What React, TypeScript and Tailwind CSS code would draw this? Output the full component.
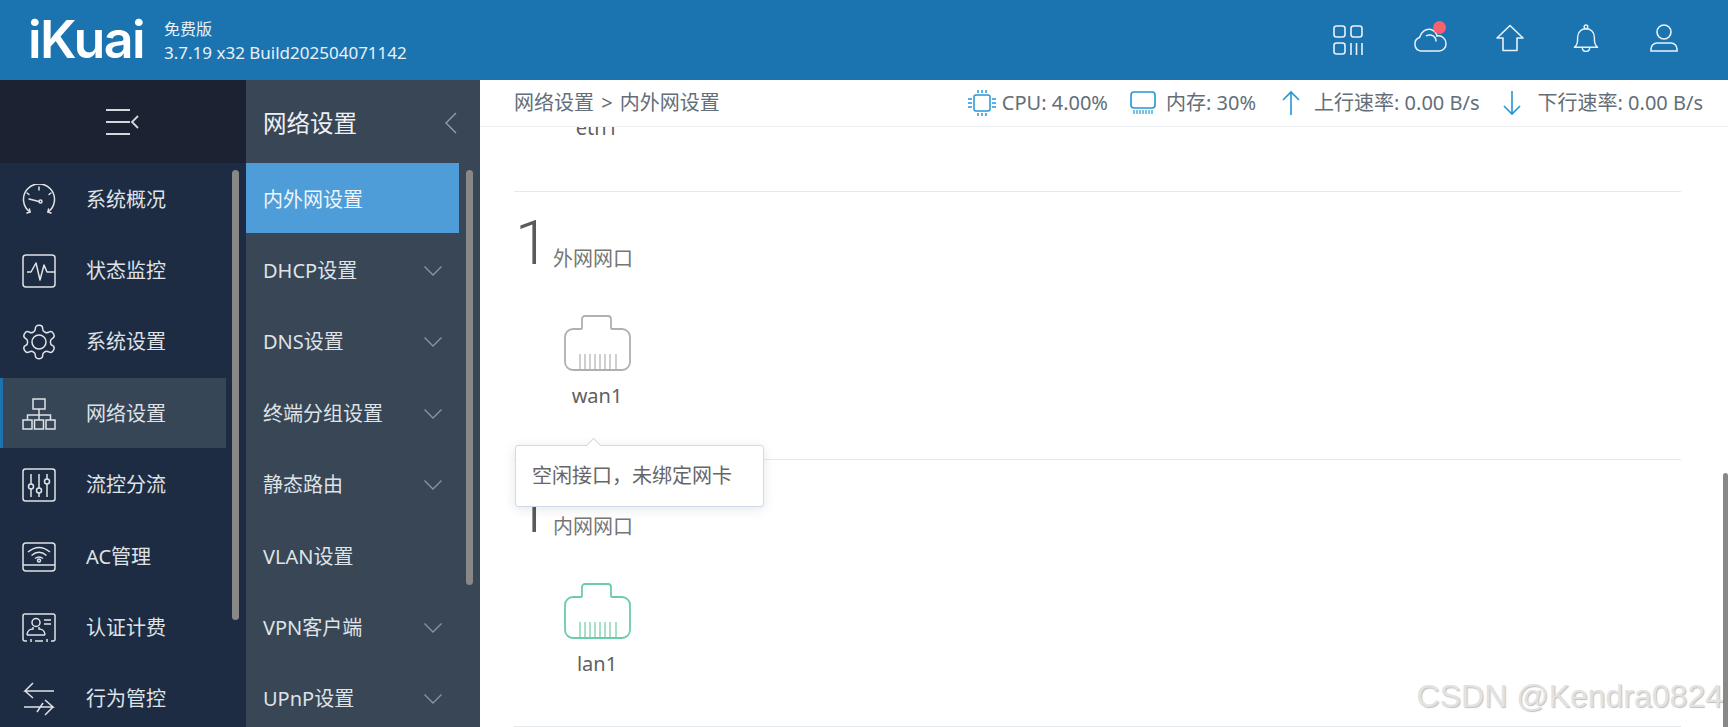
const font = "font-['Noto_Sans','Noto_Sans_CJK_SC',sans-serif]";

const Gauge = () => (
  <svg width="34" height="32" viewBox="0 0 34 32" fill="none" stroke="currentColor" strokeWidth="1.5" strokeLinecap="round">
    <path d="M8 28 A15.500 15.500 0 1 1 26 28" />
    <path d="M5 29 L8 28 L7.500 25 M29 29 L26 28 L26.500 25" />
    <path d="M7 15 L17 17.500" />
    <circle cx="18.500" cy="17.500" r="1.500" />
    <path d="M17 3v3 M5 9l2 1.500 M29 9l-2 1.500" />
  </svg>
);
const Monitor = () => (
  <svg width="34" height="34" viewBox="0 0 34 34" fill="none" stroke="currentColor" strokeWidth="1.5" strokeLinejoin="round">
    <rect x="1" y="1" width="32" height="32" rx="3" />
    <path d="M5 18 L9 18 L14 9 L18 26 L22 11 L25 18 L33 18" />
  </svg>
);
const Gear = () => (
  <svg width="40" height="40" viewBox="0 0 24 24" fill="none" stroke="currentColor" strokeWidth="0.900" strokeLinejoin="round" className="shrink-0">
    <path d="M12.220 2h-.44a2 2 0 0 0-2 2v.18a2 2 0 0 1-1 1.730l-.43.25a2 2 0 0 1-2 0l-.15-.08a2 2 0 0 0-2.730.73l-.22.38a2 2 0 0 0 .73 2.730l.15.1a2 2 0 0 1 1 1.720v.51a2 2 0 0 1-1 1.740l-.15.09a2 2 0 0 0-.73 2.730l.22.38a2 2 0 0 0 2.730.73l.15-.08a2 2 0 0 1 2 0l.43.25a2 2 0 0 1 1 1.730V20a2 2 0 0 0 2 2h.44a2 2 0 0 0 2-2v-.18a2 2 0 0 1 1-1.730l.43-.25a2 2 0 0 1 2 0l.15.08a2 2 0 0 0 2.730-.73l.22-.39a2 2 0 0 0-.73-2.730l-.15-.08a2 2 0 0 1-1-1.740v-.5a2 2 0 0 1 1-1.740l.15-.09a2 2 0 0 0 .73-2.730l-.22-.38a2 2 0 0 0-2.730-.73l-.15.08a2 2 0 0 1-2 0l-.43-.25a2 2 0 0 1-1-1.730V4a2 2 0 0 0-2-2z" />
    <circle cx="12" cy="12" r="4.200" />
  </svg>
);
const Network = () => (
  <svg width="34" height="32" viewBox="0 0 34 32" fill="none" stroke="currentColor" strokeWidth="1.5">
    <rect x="11" y="1" width="12" height="10" />
    <path d="M17 11v6 M5.500 22v-5h23v5 M17 17v5" />
    <rect x="1" y="22" width="9" height="9" />
    <rect x="12.500" y="22" width="9" height="9" />
    <rect x="24" y="22" width="9" height="9" />
  </svg>
);
const Sliders = () => (
  <svg width="34" height="34" viewBox="0 0 34 34" fill="none" stroke="currentColor" strokeWidth="1.5">
    <rect x="1" y="1" width="32" height="32" rx="2.500" />
    <path d="M9 6v10 M9 21v8 M17 6v14 M17 25v4 M25 6v5 M25 16v13" />
    <circle cx="9" cy="18.500" r="2.500" />
    <circle cx="17" cy="22.500" r="2.500" />
    <circle cx="25" cy="13.500" r="2.500" />
  </svg>
);
const Wifi = () => (
  <svg width="34" height="30" viewBox="0 0 34 30" fill="none" stroke="currentColor" strokeWidth="1.5">
    <rect x="1" y="1" width="32" height="28" rx="3" />
    <path d="M1 23h32" />
    <path d="M6 10 Q17 1 28 10 M9.500 13.500 Q17 7 24.500 13.500 M13 16.500 Q17 13.500 21 16.500" />
    <circle cx="17" cy="18.500" r="1.500" />
  </svg>
);
const Card = () => (
  <svg width="34" height="30" viewBox="0 0 34 30" fill="none" stroke="currentColor" strokeWidth="1.5">
    <path d="M5 28H3a2 2 0 0 1-2-2V3a2 2 0 0 1 2-2h28a2 2 0 0 1 2 2v23a2 2 0 0 1-2 2h-2" />
    <path d="M13 28h8 M9 26v3 M25 26v3" />
    <circle cx="14" cy="9.500" r="4" />
    <path d="M5 22c0-4 3-6 6-6v-2 M23 22c0-4-3-6-6-6v-2 M5 22h18" />
    <path d="M22 7h7 M22 11h7" />
  </svg>
);
const Swap = () => (
  <svg width="32" height="34" viewBox="0 0 32 34" fill="none" stroke="currentColor" strokeWidth="1.5">
    <path d="M31 9H2 L10 1 M2 9 L10 16" />
    <path d="M1 25H30 L22 18 M30 25 L22 33 M14 30 L20 21" />
  </svg>
);

const menu = [
  { label: "系统概况", icon: <Gauge /> },
  { label: "状态监控", icon: <Monitor /> },
  { label: "系统设置", icon: <Gear /> },
  { label: "网络设置", icon: <Network />, active: true },
  { label: "流控分流", icon: <Sliders /> },
  { label: "AC管理", icon: <Wifi /> },
  { label: "认证计费", icon: <Card /> },
  { label: "行为管控", icon: <Swap /> },
];

const subMenu = [
  { label: "内外网设置", active: true },
  { label: "DHCP设置", arrow: true },
  { label: "DNS设置", arrow: true },
  { label: "终端分组设置", arrow: true },
  { label: "静态路由", arrow: true },
  { label: "VLAN设置" },
  { label: "VPN客户端", arrow: true },
  { label: "UPnP设置", arrow: true },
];

const Port = ({ color }: { color: string }) => (
  <svg className="ml-[2px]" width="68" height="58" viewBox="0 0 68 58" fill="none" stroke={color} strokeWidth="1.800">
    <path d="M18 14V5a3 3 0 0 1 3-3h23a3 3 0 0 1 3 3v9a1 1 0 0 0 1 1h10a8 8 0 0 1 8 8v25a8 8 0 0 1-8 8H9a8 8 0 0 1-8-8V23a8 8 0 0 1 8-8h8a1 1 0 0 0 1-1z" />
    <path d="M16 56V40 M21 56V40 M26 56V40 M31 56V40 M36 56V40 M41 56V40 M46 56V40 M52 56V40" strokeWidth="1.200" />
  </svg>
);

const PortSection = ({ title, port, color }: { title: string; port: string; color: string }) => (
  <div className="h-[267.500px] border-t border-[#e6e8ea] pt-[9px]">
    <div className="flex items-end h-[75px]">
      <span className="font-['Roboto',sans-serif] font-light text-[62px] leading-[75px] w-[39px] pl-[1px] -mb-[4px] text-[#5a5a5a]">1</span>
      <span className="text-[20px] leading-[26px] mb-[4px] text-[#767676]">{title}</span>
    </div>
    <div className="w-[166px] mt-[38px] flex flex-col items-center">
      <Port color={color} />
      <span className="mt-[11px] text-[20px] leading-[26px] text-[#5f5f5f]">{port}</span>
    </div>
  </div>
);

const Chevron = () => (
  <svg width="20" height="12" viewBox="0 0 20 12" fill="none" stroke="#8a97a3" strokeWidth="1.300">
    <path d="M1.500 1.500 L10 10 L18.500 1.500" />
  </svg>
);

export default function App() {
  return (
    <div className={`${font} w-screen h-screen overflow-hidden flex flex-col bg-white`}>
      {/* top bar */}
      <header className="h-[80px] shrink-0 bg-[#1b74b0] flex items-center text-[#e9f1f7]">
        <div className="w-[150px] pl-[28px] font-['Inter',sans-serif] font-semibold text-[52px] leading-none tracking-[-1.500px] text-white">iKuai</div>
        <div className="ml-[14px] flex flex-col gap-[3px] pt-[3px]">
          <span className="text-[16px] leading-[20px]">免费版</span>
          <span className="text-[17px] leading-[22px]">3.7.19 x32 Build202504071142</span>
        </div>
        <div className="ml-auto pr-[24px] flex">
          <div className="w-[80px] flex justify-center">
            <svg width="32" height="32" viewBox="0 0 32 32" fill="none" stroke="currentColor" strokeWidth="1.600">
              <rect x="2" y="2" width="11" height="11" rx="2.500" />
              <rect x="19" y="2" width="11" height="11" rx="2.500" />
              <rect x="2" y="19" width="11" height="11" rx="2.500" />
              <path d="M19 19v12 M24.500 19v12 M30 19v12" />
            </svg>
          </div>
          <div className="w-[84px] flex justify-center relative">
            <svg width="36" height="30" viewBox="0 0 36 30" fill="none" stroke="currentColor" strokeWidth="1.500">
              <path d="M9 27a7 7 0 0 1-1.500-13.500C9 8 14 4 19 5.500c3 1 5.500 3.500 6 6.500 5-1 9 3 9 7.500a7 7 0 0 1-7 7.500z" />
              <path d="M14 12c3-2 7-1 9 1.500 1 1.500 1 3 1 4" />
            </svg>
            <span className="absolute top-[-3px] left-[45px] w-[13px] h-[13px] rounded-full bg-[#f8616f]" />
          </div>
          <div className="w-[76px] flex justify-center">
            <svg width="28" height="28" viewBox="0 0 28 28" fill="none" stroke="currentColor" strokeWidth="1.600" strokeLinejoin="round">
              <path d="M14 1.500 L27 14 H21 V26.500 H7 V14 H1 Z" />
            </svg>
          </div>
          <div className="w-[76px] flex justify-center">
            <svg width="26" height="28" viewBox="0 0 28 30" fill="none" stroke="currentColor" strokeWidth="1.500" strokeLinejoin="round">
              <path d="M1.500 25 H26.500 C23 22 23 19 23 14 C23 8.500 19 5 14 5 C9 5 5 8.500 5 14 C5 19 5 22 1.500 25 Z" />
              <circle cx="14" cy="3" r="2" />
              <path d="M10 25 C10 31 18 31 18 25" />
            </svg>
          </div>
          <div className="w-[80px] flex justify-center">
            <svg width="30" height="28" viewBox="0 0 30 28" fill="none" stroke="currentColor" strokeWidth="1.600">
              <circle cx="15" cy="8" r="7" />
              <path d="M2 27 v-2 a6 6 0 0 1 6-6 h14 a6 6 0 0 1 6 6 v2 z" />
            </svg>
          </div>
        </div>
      </header>

      <div className="flex-1 flex min-h-0">
        {/* first level menu */}
        <aside className="w-[246px] shrink-0 bg-[#1e2c43] relative overflow-hidden">
          <div className="h-[83.400px] bg-[#1b2332] flex items-center justify-center">
            <svg width="34" height="28" viewBox="0 0 34 28" fill="none" stroke="#d4d8dd" strokeWidth="1.800">
              <path d="M0 2h24 M0 14h24 M0 26h24" />
              <path d="M32 8 L26 14 L32 20" />
            </svg>
          </div>
          {menu.map((item) => (
            <div
              key={item.label}
              className={`h-[70px] mb-[1.400px] pt-[2.500px] flex items-center w-[226px] text-[#dfe2e6] ${item.active ? "bg-[#364656] border-l-[3px] border-[#1b74b0] pl-[19px]" : "pl-[22px]"}`}
            >
              <span className="w-[34px] flex justify-center shrink-0">{item.icon}</span>
              <span className="ml-[30px] text-[20px]">{item.label}</span>
            </div>
          ))}
          <div className="absolute left-[232px] top-[90px] w-[7px] h-[450px] rounded-full bg-[#888888]" />
        </aside>

        {/* second level menu */}
        <nav className="w-[234px] shrink-0 bg-[#384656] relative overflow-hidden">
          <div className="h-[83.400px] pt-[3px] flex items-center justify-between pl-[17px] pr-[23px]">
            <span className="text-[23.500px] text-[#eef1f4]">网络设置</span>
            <svg width="12" height="22" viewBox="0 0 12 22" fill="none" stroke="#95a1ac" strokeWidth="1.300">
              <path d="M11 1 L1 11 L11 21" />
            </svg>
          </div>
          {subMenu.map((item) => (
            <div
              key={item.label}
              className={`h-[70px] mb-[1.400px] pt-[2.500px] w-[213px] flex items-center justify-between pl-[17px] pr-[16px] text-[20px] ${item.active ? "bg-[#4f9dd8] text-[#edf5fb]" : "text-[#dfe3e7]"}`}
            >
              <span>{item.label}</span>
              {item.arrow && <Chevron />}
            </div>
          ))}
          <div className="absolute left-[220px] top-[90px] w-[7px] h-[415px] rounded-full bg-[#888888]" />
        </nav>

        {/* main */}
        <main className="flex-1 flex flex-col min-w-0 relative">
          <div className="h-[47px] shrink-0 border-b border-[#eef0f2] flex items-center justify-between pl-[34px] pr-[25px] text-[#636e78] text-[20px] bg-white z-10">
            <span className="[word-spacing:2px]">网络设置 &gt; 内外网设置</span>
            <div className="flex items-center">
              <svg width="30" height="28" viewBox="0 0 30 28" fill="none" stroke="#2596d4" strokeWidth="1.500">
                <rect x="7" y="6" width="16" height="16" rx="2" />
                <path d="M11 1v3 M15 1v3 M19 1v3 M11 24v3 M15 24v3 M19 24v3 M1 10h4 M1 14h4 M1 18h4 M25 10h4 M25 14h4 M25 18h4" />
              </svg>
              <span className="ml-[5px]">CPU: 4.00%</span>
              <svg className="ml-[22px]" width="26" height="24" viewBox="0 0 26 24" fill="none" stroke="#2596d4" strokeWidth="1.600">
                <rect x="1" y="1" width="24" height="16" rx="3" />
                <path d="M4 19v4 M7 19v4 M10 19v4 M13 19v4 M16 19v4 M19 19v4 M22 19v4" strokeWidth="1.200" />
              </svg>
              <span className="ml-[10px]">内存: 30%</span>
              <svg className="ml-[26px]" width="18" height="26" viewBox="0 0 18 26" fill="none" stroke="#2596d4" strokeWidth="1.600">
                <path d="M9 25V2 M1 10 L9 2 L17 10" />
              </svg>
              <span className="ml-[14px]">上行速率: 0.00 B/s</span>
              <svg className="ml-[23px]" width="18" height="26" viewBox="0 0 18 26" fill="none" stroke="#2596d4" strokeWidth="1.600">
                <path d="M9 1V24 M1 16 L9 24 L17 16" />
              </svg>
              <span className="ml-[17px]">下行速率: 0.00 B/s</span>
            </div>
          </div>

          <div className="flex-1 min-h-0 overflow-hidden relative pl-[34px] pr-[47px]">
            <div className="-mt-[12px] h-[76px] flex justify-center w-[166px]">
              <span className="text-[20px] leading-[26px] text-[#5f5f5f]">eth1</span>
            </div>
            <PortSection title="外网网口" port="wan1" color="#b0b0b0" />
            <PortSection title="内网网口" port="lan1" color="#6ccca6" />
            <div className="border-t border-[#e6e8ea]" />
            {/* scrollbar */}
            <div className="absolute right-0 top-[346px] bottom-0 w-[5px] rounded-t-sm bg-[#888888]" />
          </div>

          {/* tooltip */}
          <div className="absolute left-[35px] top-[365px] w-[249px] h-[62px] bg-white border border-[#cfdbe8] rounded-[3px] shadow-[0_2px_12px_rgba(0,0,0,0.1)] z-20 flex items-center pl-[16px] text-[20px] text-[#666666]">
            空闲接口，未绑定网卡
            <span className="absolute left-[72px] top-[-6px] w-[11px] h-[11px] rotate-45 bg-white border-l border-t border-[#cfdbe8]" />
          </div>

          {/* watermark */}
          <div className="absolute right-[5px] bottom-[15px] z-20 font-['Liberation_Sans',sans-serif] text-[32px] leading-none text-[#e2e2e2] [text-shadow:1px_1px_1px_rgba(0,0,0,0.25)]">
            CSDN @Kendra0824
          </div>
        </main>
      </div>
    </div>
  );
}
